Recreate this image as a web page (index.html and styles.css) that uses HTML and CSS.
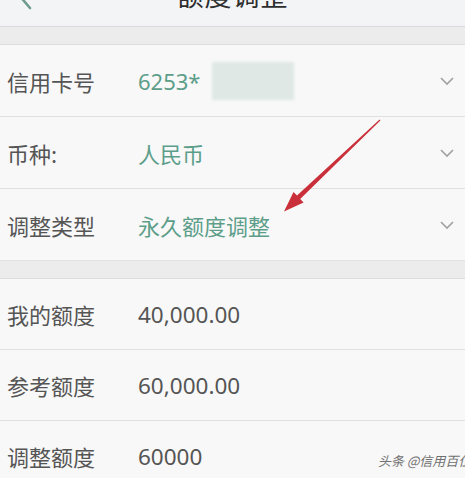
FILE: index.html
```html
<!DOCTYPE html>
<html lang="zh-CN">
<head>
<meta charset="utf-8">
<title>额度调整</title>
<link rel="stylesheet" href="styles.css">
</head>
<body>
<div class="page">
  <header class="topbar">
    <svg class="back" width="40" height="26" viewBox="0 0 40 26"><path d="M18 -6 L30 8" fill="none" stroke="#6e9c8f" stroke-width="2.6" stroke-linecap="round"/></svg>
    <h1 class="title">额度调整</h1>
    <span></span>
  </header>
  <div class="band"></div>
  <section class="group">
    <div class="row">
      <span class="label">信用卡号</span>
      <span class="value teal">6253*<span class="mask"></span></span>
      <svg class="chev" width="16" height="10" viewBox="0 0 16 10"><path d="M2 2 L8 8 L14 2" fill="none" stroke="#a0a0a0" stroke-width="1.6"/></svg>
    </div>
    <div class="row">
      <span class="label">币种:</span>
      <span class="value teal">人民币</span>
      <svg class="chev" width="16" height="10" viewBox="0 0 16 10"><path d="M2 2 L8 8 L14 2" fill="none" stroke="#a0a0a0" stroke-width="1.6"/></svg>
    </div>
    <div class="row">
      <span class="label">调整类型</span>
      <span class="value teal">永久额度调整</span>
      <svg class="chev" width="16" height="10" viewBox="0 0 16 10"><path d="M2 2 L8 8 L14 2" fill="none" stroke="#a0a0a0" stroke-width="1.6"/></svg>
    </div>
  </section>
  <div class="band"></div>
  <section class="group">
    <div class="row short">
      <span class="label">我的额度</span>
      <span class="value num">40,000.00</span>
    </div>
    <div class="row short">
      <span class="label">参考额度</span>
      <span class="value num">60,000.00</span>
    </div>
    <div class="row short">
      <span class="label">调整额度</span>
      <span class="value num">60000</span>
    </div>
  </section>
  <svg class="arrow" width="465" height="478" viewBox="0 0 465 478">
    <polygon points="379.6,119.5 380.4,120.5 300.2,198.9 303.6,202.5 284,211.5 293.5,191.9 297,195.4" fill="#c9303a"/>
  </svg>
  <div class="watermark">头条 @信用百位</div>
</div>
</body>
</html>
```
FILE: styles.css
```css
html, body {
  margin: 0;
  padding: 0;
}
body {
  background: #f7f7f7;
  font-family: "Noto Sans", "Noto Sans CJK SC", sans-serif;
  width: 465px;
  height: 478px;
  overflow: hidden;
}
.page {
  position: relative;
  width: 465px;
  height: 478px;
  overflow: hidden;
  background: #f7f7f7;
}
.topbar {
  height: 26px;
  display: grid;
  grid-template-columns: 60px 1fr 60px;
  background: #f3f4f6;
  border-bottom: 1px solid #d9d9db;
  overflow: hidden;
}
.back {
  display: block;
}
.title {
  margin: -19px 0 0 0;
  font-size: 27px;
  line-height: 27px;
  font-weight: 400;
  color: #2e2e2e;
  text-align: center;
  font-family: "Noto Sans CJK SC", sans-serif;
  letter-spacing: 1px;
}
.band {
  height: 17px;
  background: #ececec;
  border-bottom: 1px solid #dedede;
}
.group {
  background: #f8f8f8;
}
.row {
  height: 71px;
  display: flex;
  align-items: center;
  border-bottom: 1px solid #e0e0e0;
  padding: 0 10px 0 7px;
}
.row.short {
  height: 70px;
}
.group .row:last-child {
  border-bottom: 1px solid #e2e2e2;
}
.label {
  width: 131px;
  font-size: 22px;
  color: #555555;
  font-family: "Noto Sans CJK SC", sans-serif;
}
.value {
  flex: 1;
  font-size: 22px;
  display: flex;
  align-items: center;
}
.teal {
  color: #5d9e8a;
  font-family: "Noto Sans", "Noto Sans CJK SC", sans-serif;
}
.num {
  color: #555555;
  font-size: 22.5px;
}
.mask {
  display: inline-block;
  width: 82px;
  height: 38px;
  margin-left: 12px;
  background: #dfe8e5;
  filter: blur(1.5px);
}
.chev {
  display: block;
}
.arrow {
  position: absolute;
  left: 0;
  top: 0;
  pointer-events: none;
  filter: blur(0.6px);
}
.watermark {
  position: absolute;
  left: 378px;
  top: 451px;
  font-size: 13px;
  color: #707070;
  white-space: nowrap;
  font-family: "Noto Sans CJK SC", sans-serif;
  font-style: italic;
}
```
